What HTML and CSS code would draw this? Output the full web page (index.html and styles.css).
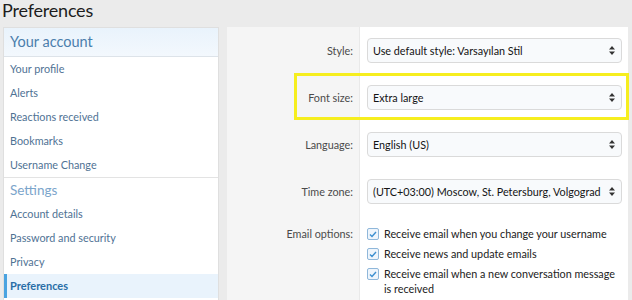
FILE: index.html
```html
<!DOCTYPE html>
<html lang="en">
<head>
    <meta charset="UTF-8">
    <title>Preferences</title>
    <link rel="stylesheet" href="styles.css">
</head>
<body>

    <!-- 제목 -->
    <h1 class="page_title">Preferences</h1>

    <div class="page">
        <!-- 왼쪽 메뉴 -->
        <div class="side">
            <div class="side_head">Your account</div>
            <a class="side_item">Your profile</a>
            <a class="side_item">Alerts</a>
            <a class="side_item">Reactions received</a>
            <a class="side_item">Bookmarks</a>
            <a class="side_item">Username Change</a>
            <div class="side_head side_head2">Settings</div>
            <a class="side_item">Account details</a>
            <a class="side_item">Password and security</a>
            <a class="side_item">Privacy</a>
            <a class="side_item active">Preferences</a>
        </div>

        <!-- 설정 폼 -->
        <div class="form">
            <div class="row">
                <div class="label">Style:</div>
                <div class="field">
                    <div class="select">
                        <span>Use default style: Varsayılan Stil</span>
                        <svg width="6" height="9" viewBox="0 0 6 9"><path d="M3 0L6 3.5H0Z M3 9L6 5.5H0Z" fill="#333"/></svg>
                    </div>
                </div>
            </div>
            <div class="row mark">
                <div class="label">Font size:</div>
                <div class="field">
                    <div class="select">
                        <span>Extra large</span>
                        <svg width="6" height="9" viewBox="0 0 6 9"><path d="M3 0L6 3.5H0Z M3 9L6 5.5H0Z" fill="#333"/></svg>
                    </div>
                </div>
            </div>
            <div class="row">
                <div class="label">Language:</div>
                <div class="field">
                    <div class="select">
                        <span>English (US)</span>
                        <svg width="6" height="9" viewBox="0 0 6 9"><path d="M3 0L6 3.5H0Z M3 9L6 5.5H0Z" fill="#333"/></svg>
                    </div>
                </div>
            </div>
            <div class="row">
                <div class="label">Time zone:</div>
                <div class="field">
                    <div class="select">
                        <span>(UTC+03:00) Moscow, St. Petersburg, Volgograd</span>
                        <svg width="6" height="9" viewBox="0 0 6 9"><path d="M3 0L6 3.5H0Z M3 9L6 5.5H0Z" fill="#333"/></svg>
                    </div>
                </div>
            </div>
            <div class="row row_check">
                <div class="label">Email options:</div>
                <div class="field">
                    <label class="check"><span class="box"><svg width="8" height="7" viewBox="0 0 8 7"><path d="M1 3.5L3 5.5L7 1" stroke="#3d8fd0" stroke-width="1.4" fill="none"/></svg></span>Receive email when you change your username</label>
                    <label class="check"><span class="box"><svg width="8" height="7" viewBox="0 0 8 7"><path d="M1 3.5L3 5.5L7 1" stroke="#3d8fd0" stroke-width="1.4" fill="none"/></svg></span>Receive news and update emails</label>
                    <label class="check"><span class="box"><svg width="8" height="7" viewBox="0 0 8 7"><path d="M1 3.5L3 5.5L7 1" stroke="#3d8fd0" stroke-width="1.4" fill="none"/></svg></span>Receive email when a new conversation message is received</label>
                </div>
            </div>
        </div>
    </div>

</body>
</html>
```

FILE: styles.css
```css
body{
    margin: 0;
    background-color: #ebebeb;
    font-family: Lato, "Open Sans", sans-serif;
    color: #141414;
    overflow: hidden;
}
.page_title{
    margin: 0;
    padding: 0 0 0 2px;
    height: 27px;
    font-size: 18px;
    font-weight: normal;
    letter-spacing: -0.2px;
    line-height: 21px;
    color: #1d1d1d;
}

.page{
    display: flex;
    gap: 8px;
    padding: 0 4px 0 3px;
}

/* 왼쪽 메뉴 */
.side{
    width: 214px;
    background-color: #fff;
    border: 1px solid #dfdfdf;
    border-bottom: none;
    display: flex;
    flex-direction: column;
}
.side_head{
    height: 28px;
    line-height: 28px;
    padding-left: 6px;
    font-size: 14.5px;
    color: #4b7eac;
    background: linear-gradient(to bottom, #e9f3fc, #f3f8fd);
    border-bottom: 1px solid #dde3e9;
}
.side_head2{
    height: 24px;
    line-height: 24px;
    font-size: 13.5px;
    color: #7ba5cb;
    background: #fff;
    border-top: 1px solid #e3e3e3;
    border-bottom: none;
}
.side_item{
    height: 24px;
    line-height: 24px;
    padding-left: 6px;
    font-size: 10.8px;
    color: #4f7294;
}
.active{
    font-weight: bold;
    font-size: 11px;
    color: #2a6ea7;
    background-color: #e9f3fc;
    border-left: 3px solid #4aa3e0;
    padding-left: 3px;
}

/* 설정 폼 */
.form{
    flex: 1;
    padding-top: 11px;
    background: linear-gradient(to right, #f5f5f5 132px, #e9e9e9 132px, #e9e9e9 133px, #fff 133px);
}
.row{
    display: grid;
    grid-template-columns: 133px 1fr;
    align-items: center;
    margin-bottom: 22px;
    position: relative;
}
.label{
    text-align: right;
    padding-right: 7px;
    font-size: 10.8px;
    color: #4a4a4a;
}
.field{
    padding: 0 6px 0 7px;
}
.select{
    height: 23px;
    border: 1px solid #dadada;
    border-radius: 4px;
    background-color: #f8fafc;
    display: flex;
    align-items: center;
    justify-content: space-between;
    padding: 0 6px 0 5px;
    font-size: 10.8px;
    white-space: nowrap;
}

/* 노란 표시 박스 */
.mark::after{
    content: "";
    position: absolute;
    left: 67px;
    right: -1px;
    top: -12px;
    bottom: -10px;
    border: 3px solid #f6ee1f;
}

.row_check{
    align-items: start;
}
.row_check .label{
    line-height: 16px;
}
.check{
    display: flex;
    align-items: flex-start;
    gap: 5px;
    font-size: 10.8px;
    line-height: 15px;
    margin-bottom: 5px;
    color: #222;
}
.box{
    flex: none;
    width: 10px;
    height: 10px;
    margin-top: 2px;
    border: 1px solid #8fb7da;
    border-radius: 2px;
    background-color: #eef5fc;
    display: flex;
    align-items: center;
    justify-content: center;
}
```
